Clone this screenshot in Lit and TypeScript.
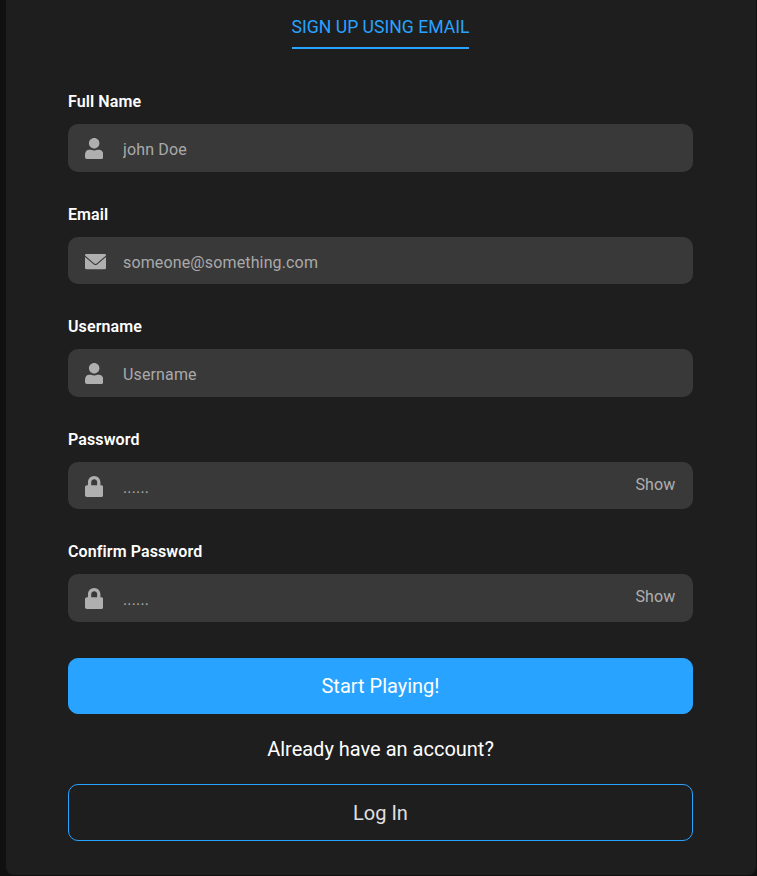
import { LitElement, html, css, svg } from "lit";
import { customElement, property } from "lit/decorators.js";

type IconName = "user" | "envelope" | "lock";

const icons: Record<IconName, { width: number; path: string }> = {
  user: {
    width: 448,
    path: "M224 256c70.7 0 128-57.3 128-128S294.7 0 224 0 96 57.3 96 128s57.3 128 128 128zM345 286h-48c-22 10-47 16-73 16s-51-6-73-16h-48C46 286 0 334 0 410v54c0 26.500 21.500 48 48 48h352c26.500 0 48-21.500 48-48v-54c0-76-46-124-103-124z",
  },
  envelope: {
    width: 512,
    path: "M28 74H484Q512 74 512 102V112L286 304Q256 328 226 304L0 112V102Q0 74 28 74zM0 146L216 328Q256 360 296 328L512 146V414Q512 442 484 442H28Q0 442 0 414z",
  },
  lock: {
    width: 448,
    path: "M400 224h-24v-72C376 68.2 307.8 0 224 0S72 68.2 72 152v72H48c-26.5 0-48 21.5-48 48v192c0 26.5 21.5 48 48 48h352c26.5 0 48-21.5 48-48V272c0-26.5-21.5-48-48-48zm-104 0H152v-72c0-39.7 32.3-72 72-72s72 32.3 72 72v72z",
  },
};

@customElement("form-field")
class FormField extends LitElement {
  @property() label = "";
  @property() hint = "";
  @property() icon: IconName = "user";
  @property({ type: Boolean }) secret = false;

  static styles = css`
    :host {
      display: block;
    }
    .label {
      display: block;
      height: 22px;
      line-height: 22px;
      font-size: 16px;
      font-weight: 600;
      letter-spacing: 0.1px;
      color: #fff;
      margin-bottom: 11px;
    }
    .box {
      display: flex;
      box-sizing: border-box;
      height: 47.5px;
      padding: 0 17px;
      border-radius: 10px;
      background: #393939;
      color: #afafaf;
    }
    .icon {
      width: 38px;
      flex: none;
      padding-top: 14px;
    }
    .icon svg {
      display: block;
      height: 21px;
      fill: currentColor;
    }
    .input {
      flex: 1;
      min-width: 0;
      padding: 3.6px 0 0;
      border: 0;
      outline: 0;
      background: none;
      font: 16px Roboto, sans-serif;
      letter-spacing: 0.14px;
      color: #afafaf;
    }
    .input::placeholder {
      color: #a9a9a9;
      opacity: 1;
    }
    .show {
      padding: 0 0.5px 2px 0;
      border: 0;
      background: none;
      font: 16px Roboto, sans-serif;
      letter-spacing: 0.14px;
      color: #afafaf;
    }
  `;

  render() {
    const icon = icons[this.icon];
    return html`
      <label class="label" for="input">${this.label}</label>
      <div class="box">
        <span class="icon">
          <svg viewBox="0 0 ${icon.width} 512">${svg`<path d=${icon.path}></path>`}</svg>
        </span>
        <input
          id="input"
          class="input"
          type=${this.secret ? "password" : "text"}
          placeholder=${this.hint}
        />
        ${this.secret ? html`<button class="show" type="button">Show</button>` : null}
      </div>
    `;
  }
}

@customElement("app-root")
class AppRoot extends LitElement {
  static styles = css`
    :host {
      display: block;
      box-sizing: border-box;
      height: 876px;
      padding: 0 1px 1px 6px;
      overflow: hidden;
      background: #101010;
      font-family: Roboto, sans-serif;
    }
    .card {
      box-sizing: border-box;
      height: 875px;
      padding: 15px 63px 0 62px;
      border-radius: 0 0 8px 8px;
      background: #1e1e1e;
      display: flex;
      flex-direction: column;
    }
    .title {
      align-self: center;
      box-sizing: border-box;
      height: 34px;
      margin: 0 0 42px;
      border-bottom: 2px solid #28a3ff;
      line-height: 24px;
      font-size: 17.6px;
      font-weight: 400;
      color: #28a3ff;
    }
    .fields {
      display: flex;
      flex-direction: column;
      gap: 32px;
    }
    .btn {
      box-sizing: border-box;
      border: 1px solid #28a3ff;
      border-radius: 10px;
      padding: 0;
      font: 20px Roboto, sans-serif;
    }
    .primary {
      height: 56px;
      margin-top: 36.5px;
      background: #28a3ff;
      color: #fff;
    }
    .prompt {
      margin: 20px 0;
      height: 30px;
      line-height: 30px;
      text-align: center;
      font-size: 20px;
      color: #fff;
    }
    .outline {
      height: 57px;
      background: transparent;
      color: #e0e0e0;
    }
  `;

  render() {
    return html`
      <form class="card">
        <h1 class="title">SIGN UP USING EMAIL</h1>
        <div class="fields">
          <form-field label="Full Name" hint="john Doe" icon="user"></form-field>
          <form-field label="Email" hint="someone@something.com" icon="envelope"></form-field>
          <form-field label="Username" hint="Username" icon="user"></form-field>
          <form-field label="Password" hint="......" icon="lock" secret></form-field>
          <form-field label="Confirm Password" hint="......" icon="lock" secret></form-field>
        </div>
        <button class="btn primary" type="button">Start Playing!</button>
        <div class="prompt">Already have an account?</div>
        <button class="btn outline" type="button">Log In</button>
      </form>
    `;
  }
}
